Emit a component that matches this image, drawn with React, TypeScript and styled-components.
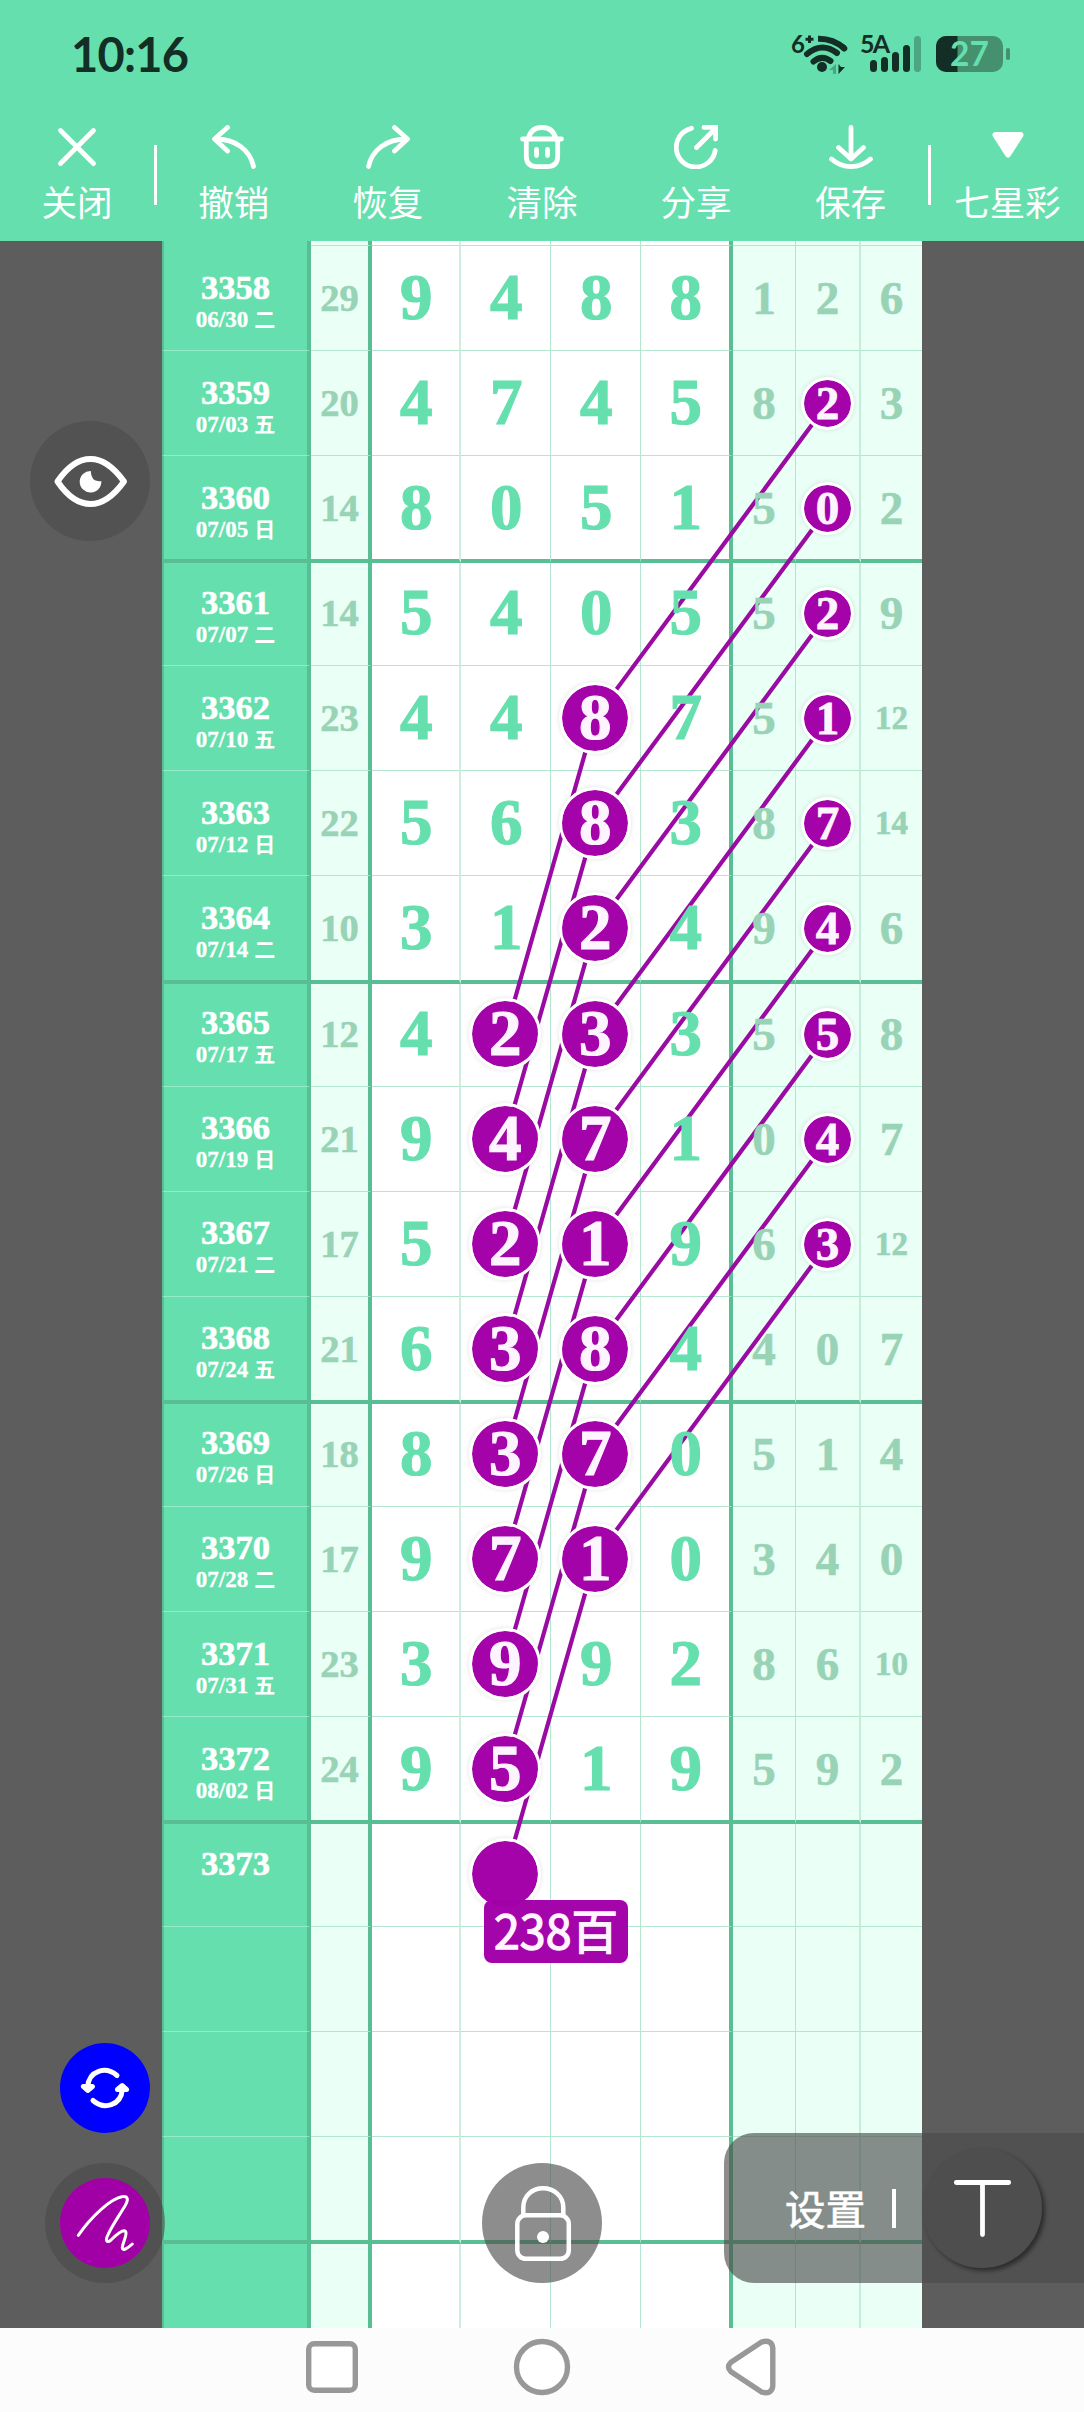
import React from 'react';
import styled, { createGlobalStyle } from 'styled-components';

const GREEN = '#66dfae';
const LINE = '#59be93';
const PURPLE = '#a303a9';
const DARK = '#132e24';
const SANS = `'Noto Sans CJK SC', 'Noto Sans', sans-serif`;
const SERIF = `'Liberation Serif', 'Noto Sans CJK SC', serif`;

const Global = createGlobalStyle`
  body { margin: 0; background: #fcfcfc; }
  * { box-sizing: border-box; }
`;

const Page = styled.div`
  width: 1084px;
  height: 2412px;
  display: flex;
  flex-direction: column;
  font-family: ${SANS};
  overflow: hidden;
`;

const Header = styled.header`
  height: 241px;
  background: ${GREEN};
  display: flex;
  flex-direction: column;
`;

const StatusBar = styled.div`
  height: 108px;
  padding: 0 74px 0 71px;
  display: flex;
  align-items: center;
  justify-content: space-between;
`;

const Clock = styled.span`
  font: 700 47px/108px Lato, ${SANS};
  letter-spacing: -0.8px;
  color: ${DARK};
`;

const StatusIcons = styled.svg`
  display: block;
  width: 220px;
  height: 60px;
  overflow: visible;
`;

const Toolbar = styled.nav`
  height: 133px;
  display: flex;
  align-items: flex-start;
`;

const Tool = styled.button<{ $w: number }>`
  width: ${(p) => p.$w}px;
  flex: none;
  padding: 17px 0 0;
  border: 0;
  background: none;
  color: #fff;
  display: flex;
  flex-direction: column;
  align-items: center;
  gap: 6px;
  font: 400 35.5px/52px ${SANS};
  white-space: nowrap;
`;

const ToolIcon = styled.svg`
  width: 44px;
  height: 44px;
  fill: none;
  stroke: currentColor;
  stroke-width: 4.8;
  stroke-linecap: round;
  stroke-linejoin: round;
`;

const Separator = styled.i`
  width: 3px;
  height: 60px;
  margin-top: 37px;
  background: #fff;
`;

const Stage = styled.main`
  position: relative;
  height: 2087px;
  background: #5d5d5d;
  display: flex;
  justify-content: center;
`;

const Chart = styled.section`
  position: relative;
  width: 760px;
  height: 2087px;
  overflow: hidden;
  font-family: ${SERIF};
  font-weight: 700;
`;

const Row = styled.div<{ $h: number }>`
  height: ${(p) => p.$h}px;
  display: flex;
`;

type Edge = { $thick?: boolean; $lift?: boolean };

const Cell = styled.div<Edge & { $w: number; $right: string; $tint?: boolean }>`
  width: ${(p) => p.$w}px;
  flex: none;
  display: flex;
  justify-content: center;
  align-items: flex-start;
  padding-top: ${(p) => (p.$lift ? 0 : 2)}px;
  background: ${(p) => (p.$tint ? '#eafff6' : '#fff')};
  border-right: ${(p) => p.$right};
  border-bottom: ${(p) => (p.$thick ? `4px solid ${LINE}` : '1px solid #b4e5ce')};
`;

const DateCell = styled.div<Edge>`
  width: 149px;
  flex: none;
  display: flex;
  flex-direction: column;
  align-items: center;
  padding-top: ${(p) => (p.$lift ? 19.5 : 21.5)}px;
  color: #fff;
  background: ${GREEN};
  border-left: 2px solid ${LINE};
  border-right: 4px solid ${LINE};
  border-bottom: ${(p) => (p.$thick ? `4px solid ${LINE}` : '1px solid #94ebc8')};
`;

const Issue = styled.span`
  font-size: 34.5px;
  line-height: 38px;
  -webkit-text-stroke: 0.6px currentColor;
`;

const Day = styled.span`
  display: flex;
  gap: 6px;
  font-size: 23px;
  line-height: 27px;
  -webkit-text-stroke: 0.3px currentColor;
`;

const Weekday = styled.span`
  font: 700 21px/25px ${SANS};
  -webkit-text-stroke: 0;
`;

const Digit = styled.span<{ $size: number; $main?: boolean }>`
  position: relative;
  z-index: 1;
  padding-left: ${(p) => (p.$main ? 1.5 : 0)}px;
  font-size: ${(p) => p.$size}px;
  line-height: ${(p) => (p.$main ? 99 : 100)}px;
  color: ${(p) => (p.$main ? GREEN : '#98d3b6')};
  -webkit-text-stroke: ${(p) => (p.$main ? 1.2 : 0.6)}px currentColor;
`;

const Ball = styled.span<{ $big?: boolean }>`
  position: relative;
  z-index: 1;
  flex: none;
  width: ${(p) => (p.$big ? 72 : 53)}px;
  height: ${(p) => (p.$big ? 72 : 53)}px;
  margin-top: ${(p) => (p.$big ? 14 : 24)}px;
  margin-right: ${(p) => (p.$big ? 1.5 : 0)}px;
  padding-left: ${(p) => (p.$big ? 1 : 0)}px;
  border: 3px solid #fff;
  border-radius: 50%;
  background: ${PURPLE};
  background-clip: padding-box;
  box-shadow: 0 0 5px rgba(0, 0, 0, 0.12);
  color: #fdf4ff;
  font-size: ${(p) => (p.$big ? 65 : 47)}px;
  line-height: ${(p) => (p.$big ? 65 : 47)}px;
  text-align: center;
  -webkit-text-stroke: ${(p) => (p.$big ? 1.2 : 0.8)}px currentColor;
`;

const Trails = styled.svg`
  position: absolute;
  left: 0;
  top: 0;
  width: 760px;
  height: 2087px;
  stroke: #990ba2;
  stroke-width: 4.2;
`;

const Label = styled.div`
  position: absolute;
  z-index: 2;
  left: 322px;
  top: 1659px;
  width: 144px;
  height: 63px;
  border-radius: 8px;
  background: rgba(161, 0, 168, 0.98);
  color: #fff4ff;
  font: 400 46.5px/58px ${SANS};
  -webkit-text-stroke: 1.3px currentColor;
  text-align: center;
  white-space: nowrap;
`;

const Floating = styled.button<{ $x: number; $y: number; $size: number; $bg: string }>`
  position: absolute;
  z-index: 3;
  left: ${(p) => p.$x}px;
  top: ${(p) => p.$y}px;
  width: ${(p) => p.$size}px;
  height: ${(p) => p.$size}px;
  padding: 0;
  border: 0;
  border-radius: 50%;
  background: ${(p) => p.$bg};
  display: grid;
  place-items: center;
  svg {
    display: block;
    fill: none;
    stroke: #fff;
    stroke-linecap: round;
    stroke-linejoin: round;
  }
`;

const PenDisc = styled.span`
  width: 90px;
  height: 90px;
  border-radius: 50%;
  background: #a100a6;
`;

const Settings = styled.div`
  position: absolute;
  z-index: 3;
  right: 0;
  top: 1892px;
  width: 360px;
  height: 150px;
  padding-left: 61px;
  border-radius: 30px 0 0 30px;
  background: rgba(75, 75, 75, 0.63);
  color: #fff;
  display: flex;
  font: 400 40.5px/149px ${SANS};
  -webkit-text-stroke: 0.7px currentColor;
`;

const SettingsBar = styled.i`
  width: 4px;
  height: 39px;
  margin: 56px 26px 0 26px;
  background: #fff;
`;

const TextTool = styled.span`
  width: 120px;
  height: 120px;
  margin-top: 15px;
  border-radius: 50%;
  background: #4e4e4e;
  box-shadow: 3px 3px 4px rgba(0, 0, 0, 0.45);
  svg {
    display: block;
    stroke: #fff;
    stroke-width: 4.8;
    stroke-linecap: round;
  }
`;

const NavBar = styled.footer`
  height: 84px;
  background: #fcfcfc;
  display: flex;
  justify-content: center;
  gap: 150px;
  padding-top: 9px;
  svg {
    width: 60px;
    height: 60px;
    fill: #fff;
    stroke: #989898;
    stroke-width: 5.4;
    stroke-linejoin: round;
  }
`;

type Draw = { issue: string; day?: string; week?: string; sum?: string; main: string; tail: string[] };

const d = (issue: string, day: string, week: string, sum: string, main: string, tail: string): Draw => ({
  issue, day, week, sum, main, tail: tail.split(' '),
});

const draws: Draw[] = [
  d('3358', '06/30', '二', '29', '9488', '1 2 6'),
  d('3359', '07/03', '五', '20', '4745', '8 2 3'),
  d('3360', '07/05', '日', '14', '8051', '5 0 2'),
  d('3361', '07/07', '二', '14', '5405', '5 2 9'),
  d('3362', '07/10', '五', '23', '4487', '5 1 12'),
  d('3363', '07/12', '日', '22', '5683', '8 7 14'),
  d('3364', '07/14', '二', '10', '3124', '9 4 6'),
  d('3365', '07/17', '五', '12', '4233', '5 5 8'),
  d('3366', '07/19', '日', '21', '9471', '0 4 7'),
  d('3367', '07/21', '二', '17', '5219', '6 3 12'),
  d('3368', '07/24', '五', '21', '6384', '4 0 7'),
  d('3369', '07/26', '日', '18', '8370', '5 1 4'),
  d('3370', '07/28', '二', '17', '9710', '3 4 0'),
  d('3371', '07/31', '五', '23', '3992', '8 6 10'),
  d('3372', '08/02', '日', '24', '9519', '5 9 2'),
  { issue: '3373', main: '    ', tail: ['', '', ''] },
  ...Array.from({ length: 4 }, () => ({ issue: '', main: '    ', tail: ['', '', ''] })),
];

const thick = `4px solid ${LINE}`;
const mainCols = [
  { w: 89, right: '2px solid #cdeee0' },
  { w: 90, right: '1px solid #b4e5ce' },
  { w: 90, right: '1px solid #b4e5ce' },
  { w: 92, right: thick },
];
const tailCols = [
  { w: 63, right: '1px solid #b4e5ce' },
  { w: 65, right: '2px solid #c4ecdb' },
  { w: 61, right: '0' },
];

const PITCH = 105.08;
const isThick = (i: number) => i % 4 === 2;
const rowHeight = (i: number) => PITCH + (isThick(i) ? 2 : 0) - (i > 0 && isThick(i - 1) ? 2 : 0);
const centre = (i: number) => 57 + i * PITCH;

const isBall = (row: number, col: number) =>
  (col === 1 && row >= 7 && row <= 15) || (col === 2 && row >= 4 && row <= 12);

function DrawRow({ draw, index }: { draw: Draw; index: number }) {
  const edge = { $thick: isThick(index), $lift: index > 0 && isThick(index - 1) };
  return (
    <Row $h={rowHeight(index)}>
      <DateCell {...edge}>
        {draw.issue && <Issue>{draw.issue}</Issue>}
        {draw.day && (
          <Day>
            {draw.day}
            <Weekday>{draw.week}</Weekday>
          </Day>
        )}
      </DateCell>
      <Cell {...edge} $w={61} $right={thick} $tint>
        <Digit $size={38.5}>{draw.sum}</Digit>
      </Cell>
      {mainCols.map((c, k) => (
        <Cell key={k} {...edge} $w={c.w} $right={c.right}>
          {isBall(index, k) ? (
            <Ball $big>{draw.main[k].trim()}</Ball>
          ) : (
            <Digit $size={65} $main>{draw.main[k].trim()}</Digit>
          )}
        </Cell>
      ))}
      {tailCols.map((c, k) => (
        <Cell key={k} {...edge} $w={c.w} $right={c.right} $tint>
          {k === 1 && index >= 1 && index <= 9 ? (
            <Ball>{draw.tail[k]}</Ball>
          ) : (
            <Digit $size={draw.tail[k].length > 1 ? 33 : 47}>{draw.tail[k]}</Digit>
          )}
        </Cell>
      ))}
    </Row>
  );
}

const tools = [
  { w: 154, label: '关闭', icon: <path d="M5.5 5.5L38.5 38.5M38.5 5.5L5.5 38.5" /> },
  { w: 153.5, label: '撤销', icon: <path d="M15.5 2.5L2.5 14L15.5 26M3 14C24 14 38 25 41.5 41.5" /> },
  { w: 154.5, label: '恢复', icon: <path d="M28.5 2.5L41.5 14L28.5 26M41 14C20 14 6 25 2.5 41.5" /> },
  {
    w: 154,
    label: '清除',
    icon: <path d="M2.5 14H41.5M8 14C10 6 15 2.5 22 2.5S34 6 36 14M6.3 14V31Q6.3 41.6 17 41.6H27Q37.7 41.6 37.7 31V14M16.5 24.5V30.5M27.5 24.5V30.5" />,
  },
  {
    w: 154,
    label: '分享',
    icon: (
      <>
        <path d="M17.5 3.3A19.6 19.6 0 1 0 41.2 25.5M22.5 22.5L40 5" />
        <path d="M30 2.4H41.6V14" strokeLinejoin="miter" />
      </>
    ),
  },
  { w: 155, label: '保存', icon: <path d="M22 2.5V34M9.5 22.5L22 34L34.5 22.5M2.5 34Q11 41.6 22 41.6T41.5 34" /> },
  { w: 153, label: '七星彩', icon: <path d="M9.500 10H34.500L22 29.500Z" fill="currentColor" strokeWidth={6} /> },
];

export default function App() {
  return (
    <Page>
      <Global />
      <Header>
        <StatusBar>
          <Clock>10:16</Clock>
          <StatusIcons viewBox="790 24 220 60">
            <g fill={DARK} fontFamily="Lato" fontWeight="700">
              <text x="791" y="53" fontSize="24">6</text>
              <text x="860" y="52.5" fontSize="25" textLength="30">5A</text>
            </g>
            <path d="M809.5 35.500V43M805.5 39.300H813.5" stroke={DARK} strokeWidth="3" />
            <g fill="none" stroke={DARK} strokeWidth="6" strokeLinecap="round">
              <path d="M818 38.8Q833 38.5 844.5 48.5" strokeLinecap="butt" />
              <path d="M843 47.3L844.3 48.5" />
              <path d="M807 54Q822 41.5 837 53" />
              <path d="M813.5 61.5Q822 54.5 830.5 61" />
            </g>
            <circle cx="822" cy="67" r="5" fill={DARK} />
            <path d="M829 70L836 64V74H833V70Z" fill="#4ba782" />
            <path d="M838.5 64V74L845 67H841Z" fill={DARK} />
            <g fill={DARK}>
              <rect x="870" y="60" width="7" height="12" rx="3.5" />
              <rect x="881" y="57" width="7" height="15" rx="3.5" />
              <rect x="892" y="52" width="7" height="20" rx="3.5" />
              <rect x="903" y="45" width="7" height="27" rx="3.5" />
            </g>
            <rect x="914" y="36" width="7" height="36" rx="3.5" fill="#4ba782" />
            <rect x="936" y="36" width="67" height="36" rx="10" fill="#44906f" />
            <path d="M957.5 36H946A10 10 0 0 0 936 46V62A10 10 0 0 0 946 72H957.5Z" fill={DARK} />
            <rect x="1006" y="48" width="4" height="12" rx="2" fill="#44906f" />
            <text x="950" y="66" fontSize="33.5" fontFamily="Lato" fontWeight="700" fill={GREEN} textLength="39">27</text>
          </StatusIcons>
        </StatusBar>
        <Toolbar>
          {tools.map((t, i) => (
            <React.Fragment key={t.label}>
              {i === 6 && <Separator />}
              <Tool $w={t.w}>
                <ToolIcon viewBox="0 0 44 44">{t.icon}</ToolIcon>
                {t.label}
              </Tool>
              {i === 0 && <Separator />}
            </React.Fragment>
          ))}
        </Toolbar>
      </Header>
      <Stage>
        <Chart>
          <Row $h={5}>
            <DateCell />
            <Cell $w={61} $right={thick} $tint />
            {mainCols.map((c, k) => <Cell key={k} $w={c.w} $right={c.right} />)}
            {tailCols.map((c, k) => <Cell key={k} $w={c.w} $right={c.right} $tint />)}
          </Row>
          {draws.map((draw, i) => <DrawRow key={i} draw={draw} index={i} />)}
          <Trails>
            {Array.from({ length: 9 }, (_, i) => (
              <path
                key={i}
                fill="none"
                d={`M666 ${centre(i + 1)}L433 ${centre(i + 4)}L343 ${centre(i + 7)}`}
              />
            ))}
          </Trails>
          <Label>238百</Label>
        </Chart>

        <Floating $x={30} $y={180} $size={120} $bg="#525252">
          <svg width="120" height="120" viewBox="0 0 120 120">
            <path d="M27.5 60.5C36 48 47 38 60.5 38S85 48 94 60.5C85 73 74 83 60.5 83S36 73 27.5 60.5Z" strokeWidth="6" />
            <path d="M60.8 50A10.8 10.8 0 1 0 71.3 60Q61 61.5 60.8 50Z" fill="#fff" stroke="none" />
          </svg>
        </Floating>
        <Floating $x={60} $y={1802} $size={90} $bg="#0000fe">
          <svg width="90" height="90" viewBox="0 0 90 90" strokeWidth="5">
            <path d="M57 32.5C46 23 29 27 27.6 44M33 57.5C44 67 61 63 62.4 46" />
            <path d="M23.3 43.5L27.7 47.5L32.5 43.5ZM57.5 46.5L62.3 42.5L66.7 46.5Z" fill="#fff" />
          </svg>
        </Floating>
        <Floating $x={45} $y={1922} $size={120} $bg="rgba(70,70,70,0.5)">
          <PenDisc>
            <svg width="90" height="90" viewBox="0 0 90 90" strokeWidth="3">
              <path d="M18.3 57.3C31 39 51 20 63 18.5C68 18 68.5 22 65.5 27C59 38 51 49 47 59C45.5 63.5 47.5 65 51 62C56 57 61 52.5 64.5 52.8C69 54 62 66 62.3 70C62.5 73 67 71 72.3 66" />
            </svg>
          </PenDisc>
        </Floating>
        <Floating $x={482} $y={1922} $size={120} $bg="rgba(75,75,75,0.63)">
          <svg width="120" height="120" viewBox="0 0 120 120" strokeWidth="4.5">
            <path d="M41.3 51V44.5C41.3 33 50 25.3 61 25.3S81.3 33 81.3 44.5V51" />
            <rect x="35.3" y="52.3" width="51.5" height="43.5" rx="8.5" />
            <circle cx="61" cy="74" r="6" fill="#fff" stroke="none" />
          </svg>
        </Floating>
        <Settings>
          设置
          <SettingsBar />
          <TextTool>
            <svg width="120" height="120" viewBox="0 0 120 120">
              <path d="M34.3 34.5H86.7M60.5 34.5V86.5" />
            </svg>
          </TextTool>
        </Settings>
      </Stage>
      <NavBar>
        <svg viewBox="0 0 60 60"><rect x="6.7" y="6.7" width="46.6" height="46.6" rx="5.5" /></svg>
        <svg viewBox="0 0 60 60"><circle cx="30" cy="30" r="25.5" /></svg>
        <svg viewBox="1 0 60 60">
          <path d="M41 4.8L10 25.2Q5 30 10 34.8L41 55.2Q50.8 57.5 51.8 49V11Q50.8 2.5 41 4.8Z" />
        </svg>
      </NavBar>
    </Page>
  );
}
